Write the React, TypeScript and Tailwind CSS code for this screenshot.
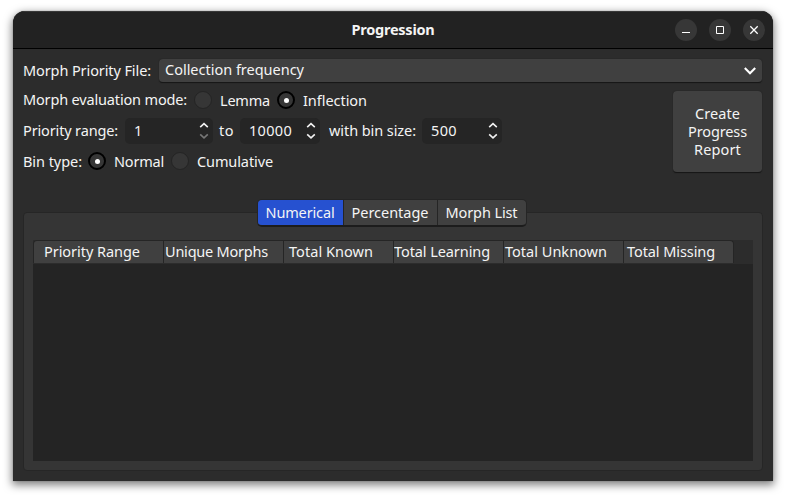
import { useLayoutEffect, useRef, type ReactNode } from 'react';

// Text run that spreads its letters evenly over a given advance width.
function Label({ children, w, className = 'pb-[2px]' }: { children: string; w: number; className?: string }) {
  const ref = useRef<HTMLSpanElement>(null);
  useLayoutEffect(() => {
    const el = ref.current;
    if (!el) return;
    el.style.letterSpacing = '0px';
    const range = document.createRange();
    range.selectNodeContents(el);
    const natural = range.getBoundingClientRect().width;
    el.style.letterSpacing = `${(w - natural) / children.length}px`;
  }, [children, w]);
  return (
    <span ref={ref} className={`block shrink-0 whitespace-nowrap ${className}`} style={{ width: w }}>
      {children}
    </span>
  );
}

function Radio({ checked = false, className = '' }: { checked?: boolean; className?: string }) {
  return (
    <span
      className={`flex size-[18px] shrink-0 items-center justify-center rounded-full bg-[#363636] ${
        checked ? 'border-2 border-black' : 'border border-[#242424]'
      } ${className}`}
    >
      {checked && <span className="size-[5px] rounded-full bg-white" />}
    </span>
  );
}

function Spin({ value, vw, className, atMin = false }: { value: string; vw: number; className: string; atMin?: boolean }) {
  return (
    <div className={`flex h-[26px] shrink-0 items-center justify-between rounded-[5px] bg-[#252525] pr-1 pl-[9px] ${className}`}>
      <Label w={vw}>{value}</Label>
      <svg width="10" height="18" viewBox="0 0 10 18" fill="none" strokeWidth="1.6">
        <path d="M1.2 5.2 5 1.7l3.8 3.5" stroke="#f2f2f2" />
        <path d="M1.2 12.3 5 15.8l3.8-3.5" stroke={atMin ? '#777777' : '#f2f2f2'} />
      </svg>
    </div>
  );
}

function WindowButton({ children }: { children: ReactNode }) {
  return (
    <button className="size-[22px] rounded-full bg-[#373737]">
      <svg width="22" height="22" viewBox="0 0 22 22" fill="none" stroke="#fff">
        {children}
      </svg>
    </button>
  );
}

const columns = [
  { text: 'Priority Range', tw: 96, cell: 'w-[131px] pl-[10px] border-l rounded-tl-[4px]' },
  { text: 'Unique Morphs', tw: 103, cell: 'w-[120px] pl-[1px]' },
  { text: 'Total Known', tw: 84, cell: 'w-[110px] pl-[5px]' },
  { text: 'Total Learning', tw: 96, cell: 'w-[110px] pl-0' },
  { text: 'Total Unknown', tw: 102, cell: 'w-[120px] pl-[1px]' },
  { text: 'Total Missing', tw: 88, cell: 'w-[110px] pl-[3px] rounded-tr-[4px]' },
];

export default function App() {
  return (
    <div className="h-[497px] w-[786px] overflow-hidden bg-white px-[13px] pt-[11px] font-['Noto_Sans',sans-serif] text-[14.5px] leading-[18px] text-[#f4f4f4]">
      <div className="flex h-[470px] w-[760px] flex-col overflow-hidden rounded-t-[12px] bg-[#2c2c2c] shadow-[0_3px_9px_1px_rgba(0,0,0,0.5),0_0_1px_rgba(0,0,0,0.5)]">
        <header className="grid h-[38px] shrink-0 grid-cols-[1fr_auto_1fr] items-center border-t border-b border-t-[#383838] border-b-black bg-[#222222]">
          <span />
          <Label w={83} className="pb-[2px] font-bold">Progression</Label>
          <div className="flex justify-end gap-3 pr-2">
            <WindowButton><path d="M7 13.5h8" /></WindowButton>
            <WindowButton><path d="M7.5 7.5h7v7h-7z" /></WindowButton>
            <WindowButton><path d="m7.3 7.3 7.4 7.4m0-7.4-7.4 7.4" strokeWidth="1.3" /></WindowButton>
          </div>
        </header>

        <main className="flex flex-col px-[10px]">
          <div className="mt-[10px] flex h-6 items-center pr-px">
            <Label w={128}>Morph Priority File:</Label>
            <div className="ml-[8px] flex h-6 flex-1 items-center justify-between rounded-[4px] border-b border-[#171717] bg-[#404040] pr-[6px] pl-[6px] shadow-[0_0_1px_#181818]">
              <Label w={139} className="pb-[3px]">Collection frequency</Label>
              <svg width="12" height="8" viewBox="0 0 12 8" fill="none" stroke="#fff" strokeWidth="2.1">
                <path d="M.8 1 6 6.2 11.2 1" />
              </svg>
            </div>
          </div>

          <div className="mt-2 flex h-[82px] justify-between pr-px">
            <div className="flex flex-col">
              <div className="flex h-[18px] items-center">
                <Label w={164}>Morph evaluation mode:</Label>
                <Radio className="ml-[7px]" />
                <Label w={50} className="ml-2 pb-px">Lemma</Label>
                <Radio checked className="ml-[7px]" />
                <Label w={64} className="ml-2 pb-px">Inflection</Label>
              </div>
              <div className="mt-[9px] flex h-[26px] items-center">
                <Label w={95}>Priority range:</Label>
                <Spin value="1" vw={9} className="ml-[7px] w-[88px]" atMin />
                <Label w={15} className="ml-[6px] pb-[2px]">to</Label>
                <Spin value="10000" vw={43} className="ml-[6px] w-[80px]" />
                <Label w={87} className="ml-[9px] pb-[2px]">with bin size:</Label>
                <Spin value="500" vw={26} className="ml-[6px] w-[80px]" />
              </div>
              <div className="mt-2 flex h-[18px] items-center">
                <Label w={59} className="pb-0">Bin type:</Label>
                <Radio checked className="ml-[6px]" />
                <Label w={50} className="ml-2">Normal</Label>
                <Radio className="ml-[7px]" />
                <Label w={76} className="ml-2">Cumulative</Label>
              </div>
            </div>
            <button className="flex h-[82px] w-[89px] flex-col items-center justify-center rounded-[4px] border-b border-[#171717] bg-[#404040] pb-[2px] shadow-[0_0_1px_#181818]">
              <Label w={45} className="">Create</Label>
              <Label w={59} className="">Progress</Label>
              <Label w={47} className="">Report</Label>
            </button>
          </div>

          <div className="z-10 mt-[26px] flex h-[28px] justify-center">
            <div className="ml-[-3px] flex h-[28px] overflow-hidden rounded-[5px] border border-b-2 border-[#252525] border-b-[#1c1c1c] bg-[#404040]">
              <button className="flex w-[86px] items-center border-r border-[#252525] bg-[#2651d0] pl-[8px]"><Label w={69}>Numerical</Label></button>
              <button className="flex w-[94px] items-center border-r border-[#252525] pl-2"><Label w={77}>Percentage</Label></button>
              <button className="flex w-[88px] items-center pl-2"><Label w={72}>Morph List</Label></button>
            </div>
          </div>

          <section className="-mt-[15px] h-[259px] rounded-[4px] border border-[#262626] bg-[#353535] px-[9px] pt-[27px]">
            <div className="h-[221px] bg-[#242424]">
              <div className="flex h-[24px] bg-[#2c2c2c] pb-px">
                {columns.map((c) => (
                  <div key={c.text} className={`flex shrink-0 items-center overflow-hidden border-t border-r border-[#252525] bg-[#404040] ${c.cell}`}>
                    <Label w={c.tw}>{c.text}</Label>
                  </div>
                ))}
              </div>
            </div>
          </section>
        </main>
      </div>
    </div>
  );
}
